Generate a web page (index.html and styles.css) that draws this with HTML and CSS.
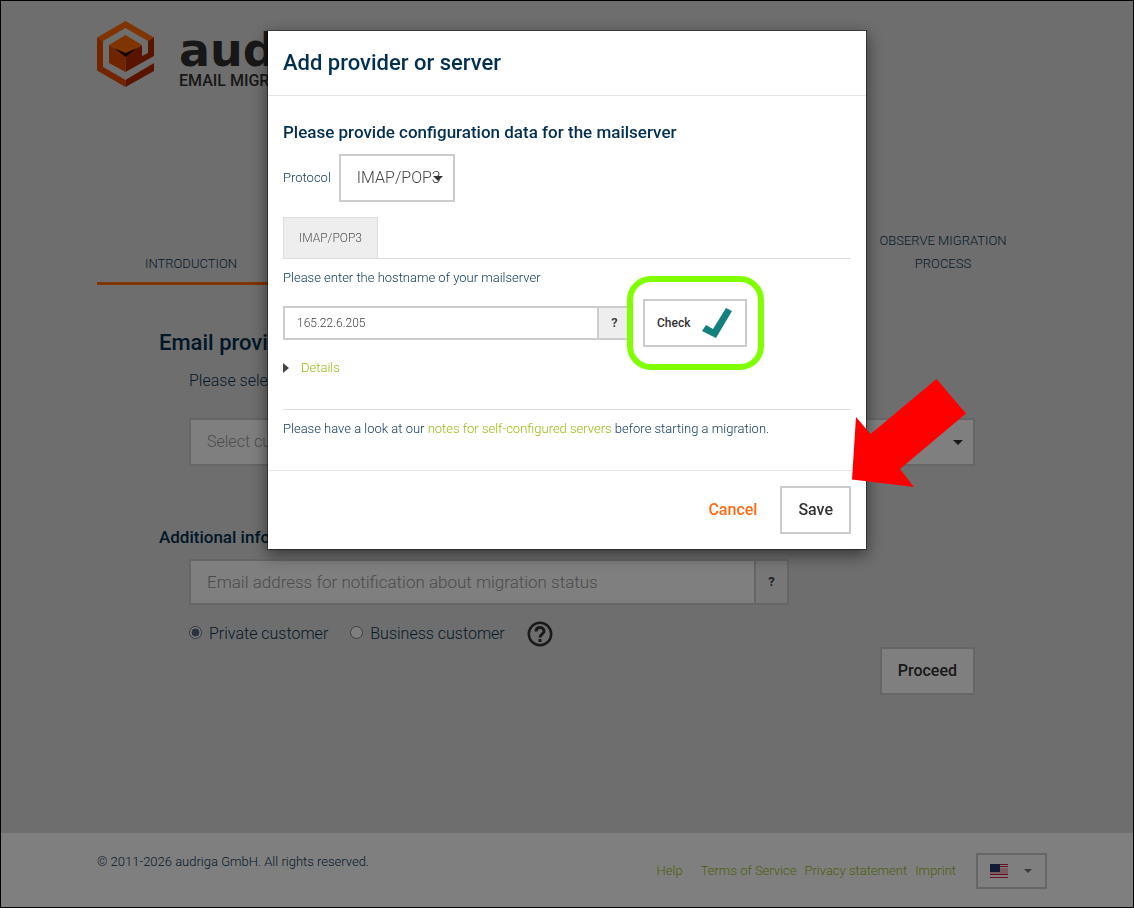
FILE: index.html
```html
<!DOCTYPE html>
<html lang="en">
<head>
  <meta charset="UTF-8">
  <meta name="viewport" content="width=device-width, initial-scale=1.0">
  <title>audriga Email Migration</title>
  <link rel="stylesheet" href="styles.css">
</head>
<body>

  <div class="page">
    <header class="container">
      <a class="logo" href="#">
        <svg width="58" height="66" viewBox="0 0 58 66" aria-hidden="true">
          <path fill="#ff6a00" d="M28.500 0 57 16.500 51 20 28.500 7 6 20 0 16.500z"/>
          <path fill="#e64a00" d="M0 16.500 6 20V46L28.500 59V66L0 49.500z"/>
          <path fill="#b22800" d="M28.500 59 57 42V50L28.500 66z"/>
          <path fill="#b22800" d="M28.500 34 45 24V35L51 32V20L57 16.500V35L28.500 51z"/>
          <path fill="#ff6a00" d="M28.500 14 45 24 28.500 34 12 24z"/>
          <path fill="#e04a00" d="M12 24 28.500 34V51L12 42z"/>
          <path fill="#2a0a00" d="M17 27 28.500 32 40 27 28.500 36z"/>
        </svg>
        <span class="logo-text">
          <span class="logo-name">audriga</span>
          <span class="logo-sub">EMAIL MIGRATION</span>
        </span>
      </a>
      <nav class="steps">
        <a class="step active" href="#">INTRODUCTION</a>
        <a class="step last" href="#">OBSERVE MIGRATION PROCESS</a>
      </nav>
    </header>

    <main class="container content">
      <h2>Email provider</h2>
      <div class="indent">
        <label class="lead" for="provider">Please select your provider</label>
        <div class="select-wrap">
          <select id="provider" class="provider">
            <option>Select current provider</option>
          </select>
        </div>
      </div>

      <h3>Additional information</h3>
      <form class="indent">
        <div class="input-group email-group">
          <input type="email" aria-label="Email address" placeholder="Email address for notification about migration status">
          <button type="button" class="addon">?</button>
        </div>
        <div class="radios">
          <label><input type="radio" name="customer" checked>Private customer</label>
          <label><input type="radio" name="customer">Business customer</label>
          <button type="button" class="help" aria-label="Help">
            <svg width="26" height="26" viewBox="0 0 26 26" fill="none" stroke="#333" stroke-width="2.500">
              <circle cx="13" cy="13" r="11.200"/>
              <path stroke-width="3" d="M9 10.500C9 7.500 11 6.500 13 6.500s4 1.200 4 3.700c0 3-4 3-4 6.300"/>
              <path stroke-width="3" d="M13 18v3"/>
            </svg>
          </button>
        </div>
      </form>
      <div class="actions">
        <button type="button" class="btn">Proceed</button>
      </div>
    </main>

    <footer>
      <div class="footer-inner">
        <span class="copyright">© 2011-2026 audriga GmbH. All rights reserved.</span>
        <div class="footer-links">
          <a class="help-link" href="#">Help</a>
          <a href="#">Terms of Service</a>
          <a href="#">Privacy statement</a>
          <a href="#">Imprint</a>
          <button type="button" class="lang" aria-label="Language">
            <svg width="18" height="14" viewBox="0 0 18 14">
              <path fill="#fff" d="M0 0h18v14H0z"/>
              <path stroke="#d0203c" d="M0 .5h18M0 2.500h18M0 4.500h18M0 6.500h18M0 8.500h18M0 10.500h18M0 13.500h18"/>
              <path fill="#f0b8c0" d="M10 4h8v4h-8zM0 8h18v2H0z"/>
              <path fill="#26386e" d="M0 0h10v8H0z"/>
            </svg>
            <span class="caret"></span>
          </button>
        </div>
      </div>
    </footer>
  </div>

  <div class="backdrop">
    <div class="modal" role="dialog" aria-labelledby="modal-title">
      <div class="modal-header">
        <h4 id="modal-title">Add provider or server</h4>
      </div>
      <div class="modal-body">
        <h5>Please provide configuration data for the mailserver</h5>
        <div class="protocol-row">
          <label for="protocol">Protocol</label>
          <div class="select-wrap">
            <select id="protocol" class="protocol">
              <option>IMAP/POP3</option>
            </select>
          </div>
        </div>
        <div class="tabs">
          <button type="button" class="tab">IMAP/POP3</button>
        </div>
        <label class="host-label" for="host">Please enter the hostname of your mailserver</label>
        <div class="host-row">
          <div class="input-group host-group">
            <input id="host" type="text" value="165.22.6.205">
            <button type="button" class="addon">?</button>
          </div>
          <div class="check-wrap">
            <button type="button" class="btn check">
              Check
              <svg width="32" height="32" viewBox="0 0 32 32"><path fill="#12807d" d="M1 24 5 18 12 22 25 1 31 4 15 31z"/></svg>
            </button>
          </div>
        </div>
        <details>
          <summary>Details</summary>
        </details>
        <p class="note">Please have a look at our <a href="#">notes for self-configured servers</a> before starting a migration.</p>
      </div>
      <div class="modal-footer">
        <button type="button" class="btn-link">Cancel</button>
        <button type="button" class="btn">Save</button>
      </div>
      <svg class="arrow" width="114" height="108" viewBox="0 0 114 108" aria-hidden="true">
        <path fill="#f00" d="M84.500 0 114 34.500 48 90 62 108 0 100.500 4 38 18.500 55z"/>
      </svg>
    </div>
  </div>

</body>
</html>
```
FILE: styles.css
```css
* {
  box-sizing: border-box;
}

body {
  margin: 0;
  font-family: Roboto, sans-serif;
  font-size: 13px;
  font-weight: 300;
  line-height: 20px;
  color: #0b3556;
  background: #dcdcdc;
}

a {
  color: #96be0f;
  text-decoration: none;
}

h2, h3, h4, h5, p {
  margin: 0;
}

h2, h3, h4, h5 {
  font-weight: 500;
  color: #032f50;
}

h2, h4 {
  font-size: 22px;
  line-height: 24px;
}

h3, h5 {
  font-size: 17px;
  line-height: 20px;
}

button, input, select {
  font: inherit;
  color: inherit;
}

button {
  cursor: pointer;
}

.page {
  display: flex;
  flex-direction: column;
  min-height: 100vh;
  border: 1px solid #000;
}

.container {
  width: 100%;
  max-width: 970px;
  margin: 0 auto;
  padding: 0 15px;
}

.logo {
  display: flex;
  gap: 24px;
  padding-top: 20px;
  height: 104px;
  color: #2f2f2f;
}

.logo-text {
  display: flex;
  flex-direction: column;
  padding-top: 7px;
}

.logo-name {
  font: bold 46px/45px "DejaVu Sans", sans-serif;
}

.logo-sub {
  font-size: 16px;
  font-weight: 500;
  line-height: 16px;
}

.steps {
  display: grid;
  grid-template-columns: repeat(5, 1fr);
  align-items: end;
  margin-top: 124px;
}

.step {
  padding: 0 20px 7px;
  border-bottom: 3px solid transparent;
  font-size: 13px;
  line-height: 23px;
  text-align: center;
  color: #0b3556;
}

.step.active {
  border-color: #ff6a00;
}

.step.last {
  grid-column: 5;
}

.content {
  flex: 1;
  padding: 46px 77px 0;
}

.indent {
  padding-left: 30px;
}

.lead {
  display: block;
  margin: 14px 0 25px;
  font-size: 16px;
  line-height: 24px;
}

.content h3 {
  margin: 61px 0 12px;
}

.select-wrap {
  position: relative;
}

.select-wrap::after,
.caret {
  content: "";
  border: 5px solid transparent;
  border-top-color: #333;
  border-bottom: 0;
}

.select-wrap::after {
  position: absolute;
  right: 12px;
  top: 22px;
  pointer-events: none;
}

select {
  display: block;
  appearance: none;
  height: 48px;
  padding: 0 16px;
  border: 2px solid #ccc;
  border-radius: 0;
  background: #fff;
  font-size: 16px;
  color: #444;
}

.provider {
  width: 100%;
  color: #999;
}

.input-group {
  display: flex;
}

.input-group input {
  flex: 1;
  min-width: 0;
  padding: 0 16px;
  border: 2px solid #ccc;
  border-right: 0;
  background: #fff;
}

.input-group input::placeholder {
  color: #999;
}

.addon {
  width: 35px;
  padding: 0;
  border: 2px solid #ccc;
  background: #eee;
  font-weight: 700;
  color: #444;
}

.email-group {
  width: 600px;
  max-width: 100%;
  height: 46px;
  font-size: 17px;
}

.email-group .addon {
  font-size: 13px;
}

.radios {
  display: flex;
  align-items: center;
  gap: 22px;
  margin-top: 16px;
  font-size: 16px;
}

.radios label {
  display: flex;
  align-items: center;
}

.radios input {
  width: 13px;
  height: 13px;
  margin: 0 7px 4px 0;
  accent-color: #56687c;
}

.help {
  display: flex;
  padding: 0;
  border: 0;
  background: none;
}

.actions {
  display: flex;
  justify-content: flex-end;
}

.btn {
  height: 48px;
  padding: 0 16px;
  border: 2px solid #ccc;
  background: #fff;
  font-size: 16px;
  font-weight: 500;
  color: #333;
}

footer {
  background: #fff;
}

.footer-inner {
  display: flex;
  justify-content: space-between;
  max-width: 980px;
  height: 74px;
  margin: 0 auto;
  padding: 20px 10px 0 20px;
}

.copyright {
  line-height: 18px;
}

.footer-links {
  display: flex;
  align-items: center;
  gap: 8px;
  height: 36px;
}

.help-link {
  margin-right: 10px;
}

.lang {
  display: flex;
  align-items: center;
  justify-content: space-between;
  width: 71px;
  height: 36px;
  margin-left: 12px;
  padding: 0 13px 0 12px;
  border: 2px solid #ccc;
  background: #fff;
}

.lang .caret {
  border-width: 4px 4px 0;
  border-top-color: #777;
}

.backdrop {
  position: fixed;
  inset: 0;
  overflow: auto;
  padding: 30px 0;
  background: rgba(0, 0, 0, 0.5);
}

.modal {
  position: relative;
  width: 600px;
  max-width: 100%;
  margin: 0 auto;
  border: 1px solid rgba(0, 0, 0, 0.4);
  background: #fff;
  background-clip: padding-box;
  box-shadow: 0 5px 15px rgba(0, 0, 0, 0.5);
}

.modal-header {
  padding: 20px 15px;
  border-bottom: 1px solid #e5e5e5;
}

.modal-body {
  padding: 26px 15px 31px;
}

.protocol-row {
  display: flex;
  align-items: center;
  gap: 8px;
  margin: 12px 0 15px;
}

.protocol {
  width: 116px;
  padding-right: 0;
}

.tabs {
  border-bottom: 1px solid #ddd;
}

.tab {
  height: 41px;
  width: 95px;
  padding: 0;
  border: 1px solid #ddd;
  border-bottom: 0;
  background: #eee;
  font-size: 12px;
  color: #555;
}

.host-label {
  display: block;
  margin-top: 9px;
}

.host-row {
  display: flex;
  align-items: center;
  margin-top: -12px;
}

.host-group {
  width: 349px;
  height: 34px;
}

.host-group input {
  padding: 0 12px;
  font-size: 12px;
  color: #444;
}

/* highlight around the check button */
.check-wrap {
  position: relative;
  margin-left: -5px;
  padding: 17px 11px 17px 10px;
  border: 6px solid #80ff00;
  border-radius: 24px;
  background: #fff;
}

.check {
  display: flex;
  align-items: center;
  gap: 11px;
  padding: 0 12px;
  font-size: 12px;
}

details {
  margin-top: -12px;
}

summary {
  display: flex;
  align-items: center;
  gap: 12px;
  color: #96be0f;
  cursor: pointer;
}

summary::before {
  content: "";
  border: 5px solid transparent;
  border-left: 6px solid #444;
  border-right: 0;
}

.note {
  margin-top: 31px;
  padding-top: 9px;
  border-top: 1px solid #ddd;
}

.modal-footer {
  display: flex;
  justify-content: flex-end;
  gap: 23px;
  padding: 15px;
  border-top: 1px solid #e5e5e5;
}

.btn-link {
  padding: 0;
  border: 0;
  background: none;
  font-size: 16px;
  font-weight: 500;
  color: #ff6a13;
}

.arrow {
  position: absolute;
  top: 348px;
  right: -100px;
}
```
